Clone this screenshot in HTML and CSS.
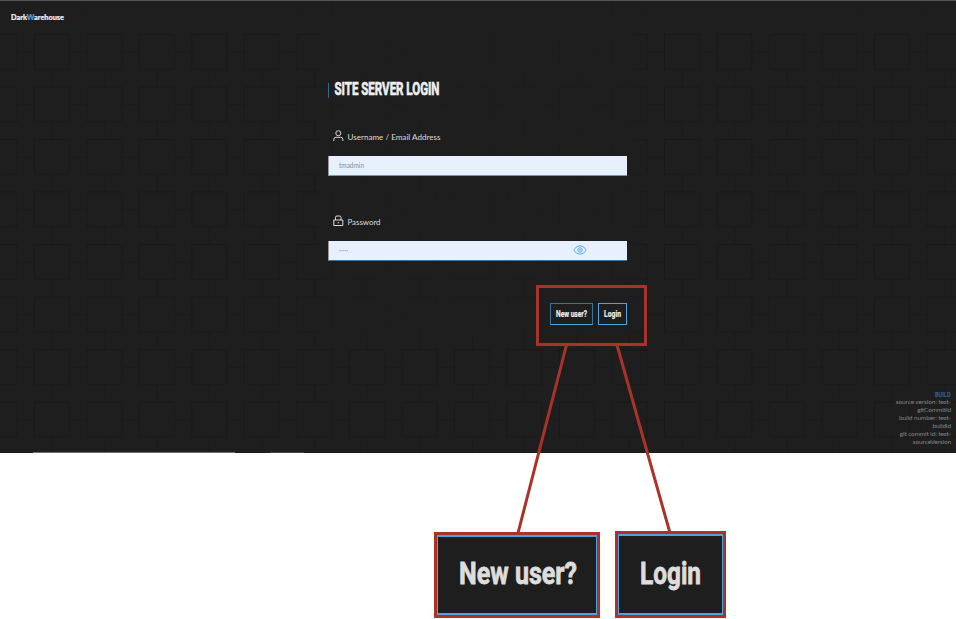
FILE: index.html
```html
<!DOCTYPE html>
<html lang="en">
<head>
<meta charset="utf-8">
<title>DarkWarehouse – Site Server Login</title>
<link rel="stylesheet" href="styles.css">
</head>
<body>
<div class="page">
  <main class="app">
    <svg class="tiles" width="956" height="451" aria-hidden="true">
      <defs>
        <pattern id="tile" width="52.5" height="52.5" patternUnits="userSpaceOnUse" x="34" y="33">
          <path d="M.5 .5h35v35H.5zM36 18h16.500M0 18h.5M18 36v16.500" fill="none" stroke="#191919" stroke-width="1"/>
        </pattern>
      </defs>
      <rect width="956" height="451" fill="url(#tile)"/>
    </svg>
    <header class="header">
      <svg class="logo" width="54" height="14"><text x="0" y="10" textLength="53" lengthAdjust="spacingAndGlyphs">Dark<tspan class="accent">W</tspan>arehouse</text></svg>
    </header>
    <form class="login">
      <h1 class="title"><svg width="106" height="18"><text x="0.5" y="17" textLength="105" lengthAdjust="spacingAndGlyphs">SITE SERVER LOGIN</text></svg></h1>
      <label class="label user-label">
        <svg width="11" height="12" viewBox="0 0 11 12" class="icon"><circle cx="5.300" cy="3.200" r="2.500"/><path d="M.8 11V9.500Q.8 7.300 3 7.300h4.600Q9.800 7.300 9.800 9.500V11"/></svg>
        <svg width="94" height="12"><text x="0.5" y="10" textLength="93" lengthAdjust="spacingAndGlyphs">Username / Email Address</text></svg>
      </label>
      <div class="field"><svg width="26" height="10"><text x="0" y="7" textLength="25" lengthAdjust="spacingAndGlyphs">tmadmin</text></svg></div>
      <label class="label pass-label">
        <svg width="11" height="12" viewBox="0 0 11 12" class="icon"><path d="M2.500 5V2.300Q2.500 1 4 1h2.500Q8 1 8 2.300V5M.8 5h9v5.500h-9zM5.300 7v1.500"/></svg>
        <svg width="34" height="12"><text x="0.5" y="9.500" textLength="33" lengthAdjust="spacingAndGlyphs">Password</text></svg>
      </label>
      <div class="field secret"><span class="dots">·····</span>
        <svg class="eye" width="14" height="10" viewBox="0 0 14 10"><path d="M.8 5Q3 .8 7 .8T13.200 5Q11 9.200 7 9.200T.8 5z"/><circle cx="7" cy="5" r="2.200"/><circle cx="7" cy="5" r=".5"/></svg>
      </div>
      <div class="actions">
        <button type="button" class="btn new"><svg width="32" height="13"><text x="0" y="9" textLength="31" lengthAdjust="spacingAndGlyphs">New user?</text></svg></button>
        <button type="button" class="btn go"><svg width="17" height="13"><text x="0" y="9" textLength="17" lengthAdjust="spacingAndGlyphs">Login</text></svg></button>
      </div>
    </form>
    <footer class="build">
      <svg width="16" height="8"><text x="0" y="7" textLength="15.500" lengthAdjust="spacingAndGlyphs">BUILD</text></svg>
      <p>source version: test-<br>gitCommitId<br>build number: test-<br>buildId<br>git commit id: test-<br>sourceVersion</p>
    </footer>
    <i class="edge edge-long"></i><i class="edge edge-short"></i>
  </main>
  <section class="callouts">
    <div class="callout wide"><div class="inner"><svg width="119" height="40"><text x="1" y="29" textLength="118" lengthAdjust="spacingAndGlyphs">New user?</text></svg></div></div>
    <div class="callout narrow"><div class="inner"><svg width="62" height="40"><text x="0" y="29" textLength="61" lengthAdjust="spacingAndGlyphs">Login</text></svg></div></div>
  </section>
  <svg class="markup" width="956" height="619" aria-hidden="true">
    <rect x="537.500" y="286.500" width="108" height="58"/>
    <path d="M566.500 345L518 533M617 345L670 533"/>
  </svg>
</div>
</body>
</html>
```
FILE: styles.css
```css
* { box-sizing: border-box; }
body { margin: 0; background: #fff; font-family: Lato, "Liberation Sans", sans-serif; }
svg { display: block; overflow: visible; }
.page { position: relative; width: 956px; height: 619px; overflow: hidden; }
.app { position: relative; height: 453px; background: #1e1e1e; border-top: 1px solid #555; }
.tiles { position: absolute; inset: 0 0 auto; overflow: hidden; }
.header { position: relative; height: 33px; padding: 9px 11px; background: rgba(30,30,30,.72); }
.logo { font: 900 8px Lato, sans-serif; fill: #f2f2f2; stroke: #f2f2f2; stroke-width: .2px; }
.accent { fill: #4ba3e3; stroke: #4ba3e3; }
.login { position: relative; width: 318px; height: 299px; margin-left: 319px; padding: 44px 10px 0 9px; background: rgba(30,30,30,.7); }
.title { margin: 0; height: 22px; padding-left: 6px; position: relative; font: 700 17.5px Roboto, sans-serif; fill: #eee; stroke: #eee; stroke-width: .7px; }
.title::before { content: ""; position: absolute; left: 0; top: 5px; width: 1px; height: 15px; background: #316a91; }
.label { display: flex; gap: 3px; height: 12px; padding-left: 5px; font-size: 8px; fill: #ddd; }
.user-label { margin-top: 30px; }
.pass-label { margin-top: 39px; }
.icon, .eye { fill: none; stroke: #ddd; stroke-width: 1; }
.field { display: flex; align-items: center; width: 299px; height: 20px; margin-top: 14px; padding-left: 10px; background: #e8f0fe; border-bottom: 1px solid #4ba3e3; border-left: 1px solid #999; font-size: 7px; fill: #888d96; }
.secret { justify-content: space-between; padding-right: 40px; padding-bottom: 2px; border-bottom-color: #39779f; }
.dots { color: #999; }
.eye { stroke: #58aee9; }
.actions { display: flex; justify-content: flex-end; gap: 5px; margin-top: 42px; }
.btn { display: flex; align-items: center; justify-content: center; height: 22px; padding: 0; background: #1e1e1e; border: 1px solid #4ba3e3; font: 700 9px Roboto, sans-serif; fill: #f0f0f0; stroke: #f0f0f0; stroke-width: .2px; }
.new { width: 43px; border-color: #3a739b #3a739b #4ba3e3; }
.go { width: 29px; }
.build { position: absolute; right: 5px; bottom: 6.5px; display: flex; flex-direction: column; align-items: flex-end; text-align: right; }
.build svg { font: 700 7px Roboto, sans-serif; fill: #2f688f; }
.build p { margin: 0; font-size: 6.500px; letter-spacing: -.12px; line-height: 8.100px; color: #858585; white-space: nowrap; }
.edge { position: absolute; bottom: 0; height: 1px; background: #707070; }
.edge-long { left: 33px; width: 202px; }
.edge-short { left: 270px; width: 34px; background: #454545; }
.callouts { display: flex; gap: 15px; padding: 78px 0 0 434px; }
.callout { border: 3px solid #a93329; background: #a93329; height: 87px; }
.wide { width: 166px; height: 86px; margin-top: 1px; }
.narrow { width: 111px; }
.inner { height: 100%; display: flex; align-items: center; justify-content: center; background: #1e1e1e; border: 2px solid #4ba3e3; border-width: 2px 1px; font: 700 31px Roboto, sans-serif; fill: #ddd; stroke: #ddd; stroke-width: .8px; }
.markup { position: absolute; inset: 0; fill: none; stroke: #a93329; stroke-width: 3; pointer-events: none; }
```
